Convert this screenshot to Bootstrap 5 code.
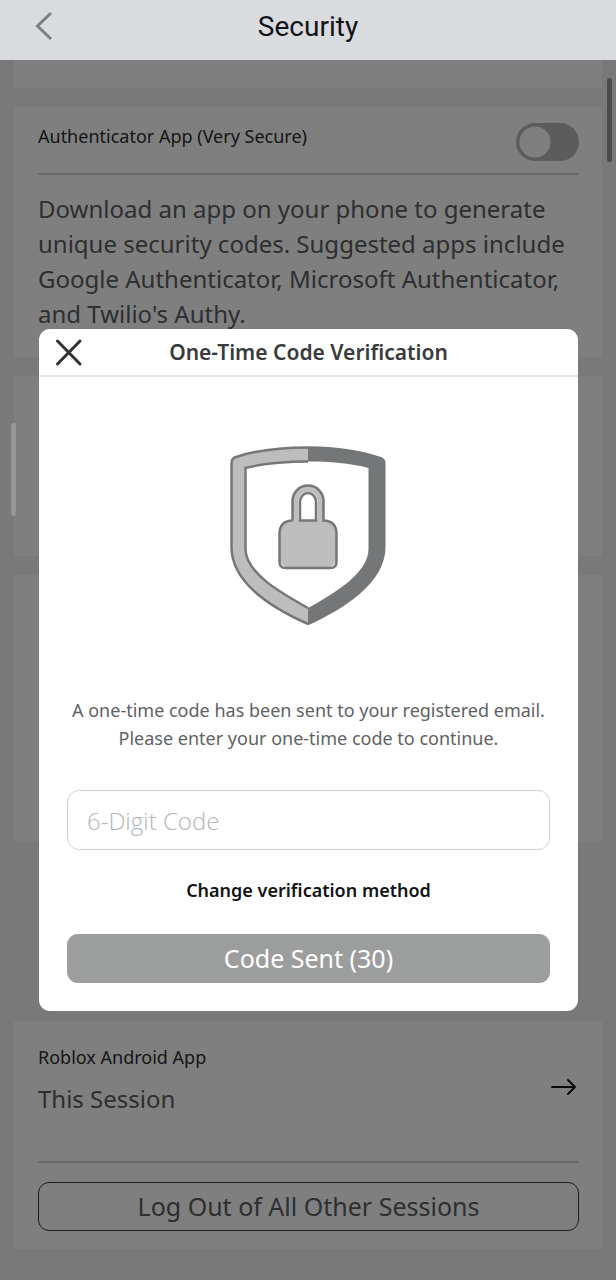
<!doctype html>
<html lang="en">
<head>
<meta charset="utf-8">
<meta name="viewport" content="width=device-width, initial-scale=1">
<title>Security</title>
<link href="https://cdn.jsdelivr.net/npm/bootstrap@5.3.0/dist/css/bootstrap.min.css" rel="stylesheet">
<style>
  body { font-family: "Noto Sans", "Open Sans", sans-serif; font-size: 24px; line-height: 35px; color: #5c5e60; background: #f2f2f2; }
  .topbar { height: 60px; background: #d9dbdf; color: #111318; z-index: 3; }
  .topbar h1 { font: 400 28px/40px Roboto, sans-serif; padding-bottom: 6px; }
  .back-btn { left: 30px; top: 8px; width: 32px; height: 36px; }
  .screen { padding: 0 14px 30px; }
  .panel { background: #fff; padding: 0 23px 0 24px; margin-bottom: 19px; }
  .panel-head { height: 68px; padding-top: 3px; border-bottom: 2px solid #d4d4d4; }
  .panel-title { font-size: 18px; line-height: 24px; color: #2c2e30; }
  .peek { height: 28px; }
  .panel-app { height: 250px; }
  .panel-email { height: 180px; }
  .panel-keys { height: 267px; }
  .panel-session { padding-bottom: 18px; margin: 179px 0 0; }
  .session-row { height: 142px; border-bottom: 2px solid #d4d4d4; }
  .toggle.form-check-input { width: 63px; height: 38px; margin: 0; border: 0; background-color: #b8b8b8;
    background-image: radial-gradient(circle closest-side, #fff 0 15px, transparent 16px); background-size: 38px 38px; background-position: left center; }
  .logout-btn { height: 49px; margin-top: 19px; border: 1px solid #393b3d; border-radius: 11px; color: #5c5e60; font-size: 25px; line-height: 24px; }
  .logout-btn, .send-btn.btn { padding: 0 0 2px; }
  .veil { background: rgba(0, 0, 0, .5); padding: 0 38px 0 39px; z-index: 2; }
  .scroll-thumb { right: 4px; top: 18px; width: 5px; height: 84px; border-radius: 3px; background: #4a4a50; }
  .edge-handle { left: 11px; top: 363px; width: 5px; height: 93px; border-radius: 3px; background: #979797; }
  .verify { border-radius: 11px; background: #fff; }
  .verify-head { height: 48px; border-bottom: 2px solid #e5e5e5; }
  .verify-head h2 { font-size: 21px; line-height: 28px; font-weight: 600; color: #393b3d; }
  .close-btn { left: 14px; top: 8px; width: 32px; height: 32px; }
  .verify-body { padding: 69px 28px 28px; }
  .verify-body p { font-size: 18px; line-height: 28px; margin: 70px -20px 38px; color: #606264; }
  .code-input.form-control { height: 60px; border: 1px solid #d0d1d2; border-radius: 12px; padding: 0 19px; font-size: 24px; color: #393b3d; }
  .code-input::placeholder { color: #b4b5b6; font-family: "Open Sans", sans-serif; font-weight: 300; opacity: 1; }
  .change-link { font-size: 18px; line-height: 28px; font-weight: 600; color: #111314; margin: 26px 0 30px; }
  .send-btn.btn { height: 49px; border: 0; border-radius: 11px; font-size: 25px; line-height: 24px; color: #fff; background: #9c9e9d; opacity: 1; }
</style>
</head>
<body class="d-flex flex-column min-vh-100">
<header class="topbar position-relative d-flex align-items-center justify-content-center">
  <button type="button" class="back-btn btn p-0 border-0 position-absolute" aria-label="Back">
    <svg class="d-block" width="32" height="36" viewBox="0 0 32 36" fill="none" stroke="#7c7e83" stroke-width="3"><path d="M21 5 7.500 18 21 31"/></svg>
  </button>
  <h1 class="m-0">Security</h1>
</header>

<main class="screen position-relative flex-grow-1">
  <section class="panel peek"></section>

  <section class="panel panel-app">
    <div class="panel-head d-flex justify-content-between align-items-center">
      <label class="panel-title pb-2 mb-1" for="authToggle">Authenticator App (Very Secure)</label>
      <input class="toggle form-check-input rounded-pill" type="checkbox" role="switch" id="authToggle">
    </div>
    <div class="pt-3">Download an app on your phone to generate unique security codes. Suggested apps include Google Authenticator, Microsoft Authenticator, and Twilio's Authy.</div>
  </section>

  <section class="panel panel-email"></section>
  <section class="panel panel-keys mb-0"></section>

  <section class="panel panel-session">
    <div class="session-row d-flex justify-content-between">
      <div class="pt-4">
        <div class="panel-title">Roblox Android App</div>
        <div class="pt-2 mt-1">This Session</div>
      </div>
      <a href="#session" class="align-self-center pb-2" aria-label="Session details">
        <svg class="d-block" width="30" height="20" viewBox="0 0 30 20" fill="none" stroke="#101214" stroke-width="2" stroke-linecap="round" stroke-linejoin="round"><path d="M3 10H26M19 3l7 7-7 7"/></svg>
      </a>
    </div>
    <button type="button" class="logout-btn btn w-100">Log Out of All Other Sessions</button>
  </section>

  <div class="veil position-absolute top-0 bottom-0 start-0 end-0 d-flex align-items-center">
    <span class="scroll-thumb position-absolute"></span>
    <span class="edge-handle position-absolute"></span>
    <div class="verify w-100" role="dialog" aria-modal="true" aria-labelledby="verifyTitle">
      <div class="verify-head position-relative d-flex align-items-center justify-content-center">
        <button type="button" class="close-btn btn p-0 border-0 position-absolute" aria-label="Close">
          <svg class="d-block" width="32" height="32" viewBox="0 0 32 32" fill="none" stroke="#303335" stroke-width="3" stroke-linecap="round"><path d="M4.500 4 27 27M27 4 4.500 27"/></svg>
        </button>
        <h2 class="m-0" id="verifyTitle">One-Time Code Verification</h2>
      </div>
      <form class="verify-body text-center">
        <svg class="d-block mx-auto" width="158" height="180" viewBox="1 0 158 180">
          <path d="M79 1.500C50 1.500 25 5 7 11Q2.500 12.500 2.500 17V101C2.500 137 43 162 79 178V162C52 147 16.500 127 16.500 103V22C36 17 57 15.500 79 15.500Z" fill="#bdbdbd"/>
          <path d="M79 1.500C50 1.500 25 5 7 11Q2.500 12.500 2.500 17V101C2.500 137 43 162 79 178M79 162C52 147 16.500 127 16.500 103V22C36 17 57 15.500 79 15.500" fill="none" stroke="#747677" stroke-width="2.500"/>
          <path d="M79 .300C108 .300 133 4.500 152 11Q156.500 12.500 156.500 17V101C156.500 137 115 163 79 179.300V162C106 147 139.500 127 139.500 103V22C121 17 101 15.500 79 15.500Z" fill="#747677"/>
          <path d="M63.500 75V55a15.500 15.500 0 0 1 31 0v20h-6V55a9.500 9.500 0 0 0-19 0v20z" fill="#bdbdbd" />
          <rect x="50.500" y="74" width="57" height="48" rx="10" fill="#bdbdbd"/>
          <path d="M63.500 74.500V55a15.500 15.500 0 0 1 31 0v19.500Q107.500 75 107.500 88v28q0 6-6 6h-45q-6 0-6-6V88q0-13 13-13.500M71 74.500h16V56a8 9 0 0 0-16 0z" fill="none" stroke="#747677" stroke-width="2.500"/>
        </svg>
        <p>A one-time code has been sent to your registered email.<br>Please enter your one-time code to continue.</p>
        <input type="text" inputmode="numeric" class="code-input form-control" placeholder="6-Digit Code" aria-label="6-Digit Code">
        <button type="button" class="change-link btn p-0 border-0">Change verification method</button>
        <button type="button" class="send-btn btn w-100 d-block" disabled>Code Sent (30)</button>
      </form>
    </div>
  </div>
</main>
<script src="https://cdn.jsdelivr.net/npm/bootstrap@5.3.0/dist/js/bootstrap.bundle.min.js"></script>
</body>
</html>
